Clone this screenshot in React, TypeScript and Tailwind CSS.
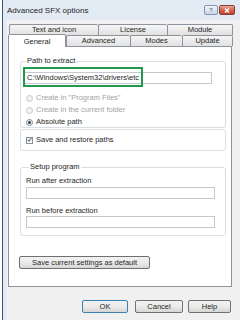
import type { ReactNode } from "react";

const font = "font-['Liberation_Sans','Arial',sans-serif]";

function Tab({
  label,
  width,
  last,
}: {
  label: string;
  width: string;
  last?: boolean;
}) {
  return (
    <div
      className={`${width} flex h-full items-center justify-center rounded-t-[2px] border-t border-l border-[#8e939b] bg-gradient-to-b from-[#f6f6f6] to-[#e1e1e1] ${
        last ? "border-r" : ""
      }`}
    >
      {label}
    </div>
  );
}

function Radio({
  label,
  checked,
  disabled,
}: {
  label: string;
  checked?: boolean;
  disabled?: boolean;
}) {
  return (
    <div className="flex h-[12px] items-center gap-[3px] pl-[5px]">
      <span
        className={`flex h-[7px] w-[7px] items-center justify-center rounded-full border ${
          disabled
            ? "border-[#c9c9c9] bg-[#f2f2f2]"
            : "border-[#8a8a8a] bg-gradient-to-b from-[#e8e8e8] to-[#ffffff]"
        }`}
      >
        {checked && (
          <span className="h-[3px] w-[3px] rounded-full bg-[#24406a]" />
        )}
      </span>
      <span className={disabled ? "text-[#a3a3a3]" : ""}>{label}</span>
    </div>
  );
}

function Group({
  title,
  className,
  children,
}: {
  title?: string;
  className?: string;
  children: ReactNode;
}) {
  return (
    <fieldset
      className={`ml-[11px] w-[206px] rounded-[3px] border border-[#d5dfe5] ${className ?? ""}`}
    >
      {title && (
        <legend className="ml-[3px] px-[1px] leading-[10px]">{title}</legend>
      )}
      {children}
    </fieldset>
  );
}

function Field({ value }: { value?: string }) {
  return (
    <div className="flex h-[12px] w-[189px] items-center border border-[#c5c9cf] bg-white pl-[3px] whitespace-nowrap">
      {value}
    </div>
  );
}

function Button({
  label,
  width,
  primary,
}: {
  label: string;
  width: string;
  primary?: boolean;
}) {
  return (
    <div
      className={`${width} flex h-[13px] items-center justify-center rounded-[2px] border bg-gradient-to-b from-[#f2f2f2] via-[#ebebeb] to-[#d6d6d6] ${
        primary ? "border-[#3c7fb1] from-[#eaf6fd] to-[#cfe6f5]" : "border-[#707070]"
      }`}
    >
      {label}
    </div>
  );
}

export default function App() {
  return (
    <div
      className={`${font} flex h-[320px] w-[240px] overflow-hidden bg-white text-[7.5px] leading-none text-[#262626]`}
    >
      <div className="w-[2px]" />
      <div className="flex flex-1 flex-col border-l border-[#36557f] bg-[#e2eaf4]">
        {/* title bar */}
        <div className="flex h-[20px] items-center pl-[4px]">
          <span className="flex-1 pt-[1px] text-[8px]">Advanced SFX options</span>
          <div className="mr-[5px] flex gap-[1px]">
            <div className="flex h-[10px] w-[14px] items-center justify-center rounded-[2px] border border-[#8196b2] bg-gradient-to-b from-[#f1f5fa] to-[#c9d6e6] text-[6px] text-[#4a5a70]">
              ?
            </div>
            <div className="flex h-[10px] w-[16px] items-center justify-center rounded-[2px] border border-[#8b3a3a] bg-gradient-to-b from-[#e9a99c] via-[#d4644f] to-[#c2412b]">
              <svg width="6" height="5" viewBox="0 0 6 5">
                <path
                  d="M1 0.5 L5 4.5 M5 0.5 L1 4.5"
                  stroke="#ffffff"
                  strokeWidth="1.4"
                />
              </svg>
            </div>
          </div>
        </div>

        {/* client area */}
        <div className="ml-[3px] flex flex-1 flex-col bg-[#f0f0f0] pt-[4px]">
          <div className="ml-[2px] flex flex-col">
            <div className="flex h-[11px] pl-[1px]">
              <Tab label="Text and icon" width="w-[89px]" />
              <Tab label="License" width="w-[69px]" />
              <Tab label="Module" width="w-[66px]" last />
            </div>
            <div className="relative z-10 flex h-[11px] items-end">
              <div className="-mb-[1px] flex h-[13px] w-[58px] items-start justify-center rounded-t-[2px] border-t border-r border-l border-[#8e939b] bg-white pt-[3px]">
                General
              </div>
              <Tab label="Advanced" width="w-[64px]" />
              <Tab label="Modes" width="w-[52px]" />
              <Tab label="Update" width="w-[51px]" last />
            </div>
          </div>

          {/* panel */}
          <div className="ml-[2px] h-[241px] w-[224px] border border-[#8e939b] bg-white">
            <Group title="Path to extract" className="mt-[9px] h-[72px] pl-[2px]">
              <div className="relative mt-[1px] h-[20px]">
                <div className="pt-[5px]">
                  <Field value="C:\Windows\System32\drivers\etc" />
                </div>
                <div className="absolute top-0 left-0 h-[20px] w-[120px] border-2 border-[#1f9a4c]" />
              </div>
              <div className="mt-[5px] -ml-[2px]">
                <Radio label='Create in "Program Files"' disabled />
                <Radio label="Create in the current folder" disabled />
                <Radio label="Absolute path" checked />
              </div>
            </Group>

            <Group className="mt-[1px] h-[22px]">
              <div className="flex h-[20px] items-center gap-[3px] pl-[5px]">
                <span className="flex h-[7px] w-[7px] items-center justify-center border border-[#8e8f8f] bg-gradient-to-b from-[#e4e4e4] to-white">
                  <svg width="6" height="6" viewBox="0 0 6 6">
                    <path
                      d="M0.8 3 L2.3 4.6 L5.2 0.8"
                      fill="none"
                      stroke="#2b4a78"
                      strokeWidth="1.1"
                    />
                  </svg>
                </span>
                <span>Save and restore paths</span>
              </div>
            </Group>

            <Group title="Setup program" className="mt-[11px] h-[74px] pl-[5px]">
              <div className="mt-[4px] flex h-[10px] items-center">
                Run after extraction
              </div>
              <div className="mt-[1px]">
                <Field />
              </div>
              <div className="mt-[7px] flex h-[10px] items-center">
                Run before extraction
              </div>
              <div>
                <Field />
              </div>
            </Group>

            <div className="mt-[20px] ml-[10px]">
              <Button label="Save current settings as default" width="w-[131px]" />
            </div>
          </div>

          {/* dialog buttons */}
          <div className="mt-[13px] flex pr-[9px] justify-end">
            <Button label="OK" width="w-[46px]" primary />
            <div className="ml-[7px]">
              <Button label="Cancel" width="w-[48px]" />
            </div>
            <div className="ml-[5px]">
              <Button label="Help" width="w-[43px]" />
            </div>
          </div>
        </div>
      </div>
    </div>
  );
}
